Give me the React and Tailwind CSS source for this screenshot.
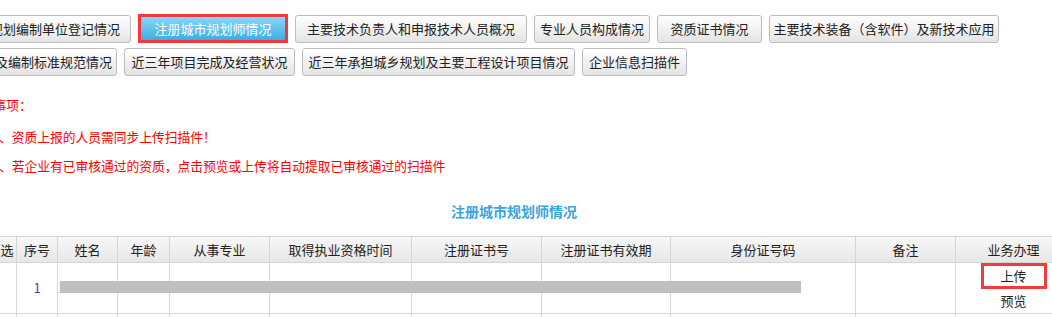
import React from "react";

const font = { fontFamily: '"Noto Sans CJK SC", "Noto Sans", sans-serif' };

const row1 = [
  { label: "城乡规划编制单位登记情况", w: "w-[190px] -ml-[59px] justify-end pr-[10px]" },
  { label: "注册城市规划师情况", w: "w-[150px]", active: true },
  { label: "主要技术负责人和申报技术人员概况", w: "w-[232px]" },
  { label: "专业人员构成情况", w: "w-[116px]" },
  { label: "资质证书情况", w: "w-[105px]" },
  { label: "主要技术装备（含软件）及新技术应用", w: "w-[230px]" },
];

const row2 = [
  { label: "涉及编制标准规范情况", w: "w-[160px] -ml-[43px] justify-end pr-[4px]" },
  { label: "近三年项目完成及经营状况", w: "w-[171px]" },
  { label: "近三年承担城乡规划及主要工程设计项目情况", w: "w-[273px]" },
  { label: "企业信息扫描件", w: "w-[105px]" },
];

const columns = [
  { title: "全选", w: "w-[32px]" },
  { title: "序号", w: "w-[41px]" },
  { title: "姓名", w: "w-[60px]" },
  { title: "年龄", w: "w-[52px]" },
  { title: "从事专业", w: "w-[100px]" },
  { title: "取得执业资格时间", w: "w-[142px]" },
  { title: "注册证书号", w: "w-[130px]" },
  { title: "注册证书有效期", w: "w-[129px]" },
  { title: "身份证号码", w: "w-[185px]" },
  { title: "备注", w: "w-[100px]" },
  { title: "业务办理", w: "w-[116px]" },
];

function TabButton({ label, w, active }) {
  if (active) {
    return (
      <div className={`${w} h-[29px] -mt-px shrink-0 border-[3px] border-[#f2373d] bg-gradient-to-b from-[#86d8f7] to-[#3aaee2] flex items-center justify-center text-white text-[13px]`}>
        {label}
      </div>
    );
  }
  return (
    <div className={`${w} h-[28px] shrink-0 rounded-[3px] border border-[#bdbdbd] bg-gradient-to-b from-white to-[#e4e4e4] flex items-center justify-center text-[#222] text-[13px] whitespace-nowrap`}>
      {label}
    </div>
  );
}

function App() {
  return (
    <div className="w-full min-h-screen bg-white overflow-hidden" style={font}>
      <div className="pt-[15px] flex flex-col gap-[5px]">
        <div className="flex gap-[7px]">
          {row1.map((b) => (
            <TabButton key={b.label} {...b} />
          ))}
        </div>
        <div className="flex gap-[7px]">
          {row2.map((b) => (
            <TabButton key={b.label} {...b} />
          ))}
        </div>
      </div>

      <div className="text-[#ff0000] text-[12.75px] whitespace-nowrap">
        <div className="mt-[16px] leading-[26px] -ml-[32px]">注意事项：</div>
        <div className="mt-[6px] leading-[26px] -ml-[8px]">1、资质上报的人员需同步上传扫描件！</div>
        <div className="mt-[3px] leading-[26px] -ml-[8px]">2、若企业有已审核通过的资质，点击预览或上传将自动提取已审核通过的扫描件</div>
      </div>

      <div className="mt-[22px] leading-[20px] text-center text-[14px] font-bold text-[#38a5dc] pr-[24px]">
        注册城市规划师情况
      </div>

      <div className="relative mt-[15px] -ml-[16px] w-[1087px]">
        <table className="table-fixed border-collapse w-[1087px] text-[13px] text-[#222]">
          <colgroup>
            {columns.map((c) => (
              <col key={c.title} className={c.w} />
            ))}
          </colgroup>
          <thead>
            <tr className="h-[26px] bg-gradient-to-b from-[#f8f8f8] to-[#e6e6e6]">
              {columns.map((c) => (
                <th key={c.title} className="border border-[#d6d6d6] font-normal p-0 whitespace-nowrap">
                  {c.title}
                </th>
              ))}
            </tr>
          </thead>
          <tbody>
            <tr className="h-[51px]">
              <td className="border border-[#d6d6d6]"></td>
              <td className="border border-[#d6d6d6] text-center text-[#1f56a8]">1</td>
              <td className="border border-[#d6d6d6] text-left pl-[1px] text-[12px]">亚</td>
              <td className="border border-[#d6d6d6]"></td>
              <td className="border border-[#d6d6d6]"></td>
              <td className="border border-[#d6d6d6]"></td>
              <td className="border border-[#d6d6d6]"></td>
              <td className="border border-[#d6d6d6]"></td>
              <td className="border border-[#d6d6d6]"></td>
              <td className="border border-[#d6d6d6]"></td>
              <td className="border border-[#d6d6d6] p-0 align-top text-center">
                <div className="flex flex-col items-center">
                  <span className="w-[66px] h-[26px] border-[3px] border-[#f23b3b] flex items-center justify-center">上传</span>
                  <span className="leading-[24px]">预览</span>
                </div>
              </td>
            </tr>
            <tr className="h-[10px]">
              {columns.map((c) => (
                <td key={c.title} className="border border-[#d6d6d6]"></td>
              ))}
            </tr>
          </tbody>
        </table>
        <div className="absolute left-[76px] top-[45px] w-[741px] h-[12px] bg-[#bfbfbf]" />
      </div>
    </div>
  );
}

export default App;
